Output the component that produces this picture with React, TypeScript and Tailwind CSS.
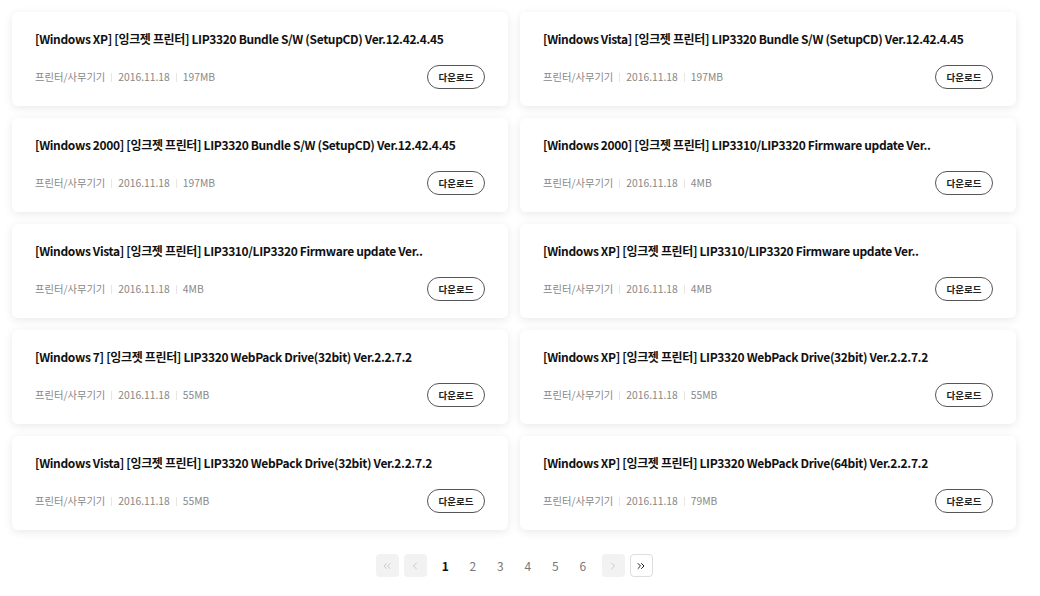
import { ChevronLeft, ChevronRight, ChevronsLeft, ChevronsRight } from "lucide-react";

const items = [
  { title: "[Windows XP] [잉크젯 프린터] LIP3320 Bundle S/W (SetupCD) Ver.12.42.4.45", size: "197MB" },
  { title: "[Windows Vista] [잉크젯 프린터] LIP3320 Bundle S/W (SetupCD) Ver.12.42.4.45", size: "197MB" },
  { title: "[Windows 2000] [잉크젯 프린터] LIP3320 Bundle S/W (SetupCD) Ver.12.42.4.45", size: "197MB" },
  { title: "[Windows 2000] [잉크젯 프린터] LIP3310/LIP3320 Firmware update Ver..", size: "4MB" },
  { title: "[Windows Vista] [잉크젯 프린터] LIP3310/LIP3320 Firmware update Ver..", size: "4MB" },
  { title: "[Windows XP] [잉크젯 프린터] LIP3310/LIP3320 Firmware update Ver..", size: "4MB" },
  { title: "[Windows 7] [잉크젯 프린터] LIP3320 WebPack Drive(32bit) Ver.2.2.7.2", size: "55MB" },
  { title: "[Windows XP] [잉크젯 프린터] LIP3320 WebPack Drive(32bit) Ver.2.2.7.2", size: "55MB" },
  { title: "[Windows Vista] [잉크젯 프린터] LIP3320 WebPack Drive(32bit) Ver.2.2.7.2", size: "55MB" },
  { title: "[Windows XP] [잉크젯 프린터] LIP3320 WebPack Drive(64bit) Ver.2.2.7.2", size: "79MB" },
];

function Card({ title, size }: { title: string; size: string }) {
  return (
    <div className="h-[94px] rounded-md bg-white px-[23px] pt-[17px] shadow-[0_2px_10px_rgba(0,0,0,0.09)]">
      <div className="whitespace-nowrap text-[12px] font-bold leading-[20px] tracking-[-0.35px] text-[#111]">{title}</div>
      <div className="mt-[16px] flex items-center justify-between">
        <div className="flex items-center text-[10.3px] text-[#888]">
          <span>프린터/사무기기</span>
          <span className="mx-[6px] h-[9px] w-px bg-[#e6e6e6]" />
          <span>2016.11.18</span>
          <span className="mx-[6px] h-[9px] w-px bg-[#e6e6e6]" />
          <span>{size}</span>
        </div>
        <button className="h-[24px] w-[58px] rounded-full border border-[#555] bg-white text-[9.5px] font-bold text-[#222]">
          다운로드
        </button>
      </div>
    </div>
  );
}

export default function App() {
  return (
    <div className="min-h-screen bg-white pt-3 pl-3 font-['Noto_Sans_CJK_KR','Noto_Sans',sans-serif]">
      <div className="grid w-[1004px] grid-cols-2 gap-x-3 gap-y-3">
        {items.map((it, i) => (
          <Card key={i} title={it.title} size={it.size} />
        ))}
      </div>
      <div className="mt-6 flex w-[1004px] items-center justify-center text-[12px]">
        <button className="flex h-[23px] w-[23px] items-center justify-center rounded-sm bg-[#f2f2f2] text-[#bbb]">
          <ChevronsLeft className="h-3 w-3" strokeWidth={1.5} />
        </button>
        <button className="ml-[5px] flex h-[23px] w-[23px] items-center justify-center rounded-sm bg-[#f2f2f2] text-[#bbb]">
          <ChevronLeft className="h-3 w-3" strokeWidth={1.5} />
        </button>
        <div className="mx-[5px] flex items-center">
          {[1, 2, 3, 4, 5, 6].map((n) => (
            <span
              key={n}
              className={`flex w-[27.5px] justify-center ${n === 1 ? "font-bold text-[#111]" : "text-[#777]"}`}
            >
              {n}
            </span>
          ))}
        </div>
        <button className="flex h-[23px] w-[23px] items-center justify-center rounded-sm bg-[#f2f2f2] text-[#bbb]">
          <ChevronRight className="h-3 w-3" strokeWidth={1.5} />
        </button>
        <button className="ml-[5px] flex h-[23px] w-[23px] items-center justify-center rounded-sm border border-[#ddd] bg-white text-[#222]">
          <ChevronsRight className="h-3 w-3" strokeWidth={2} />
        </button>
      </div>
    </div>
  );
}
